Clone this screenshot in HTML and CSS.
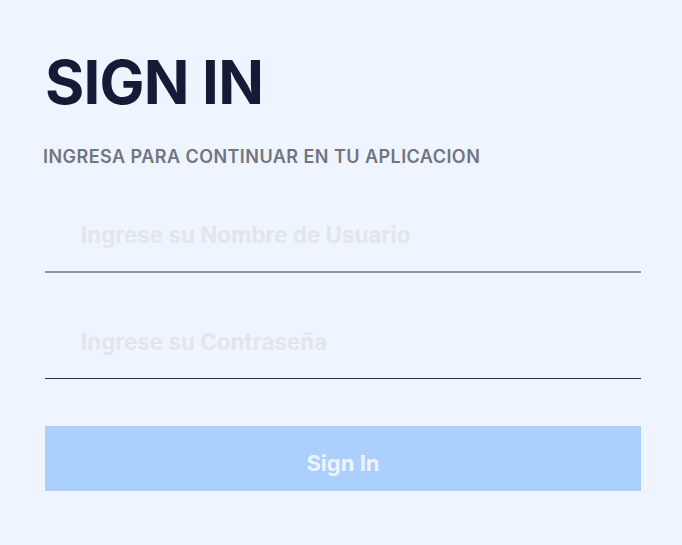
FILE: index.html
```html
<!DOCTYPE html>
<html lang="es">
<head>
<meta charset="utf-8">
<title>Sign In</title>
<link rel="stylesheet" href="styles.css">
</head>
<body>
<main class="login">
  <h1 class="title">SIGN IN</h1>
  <p class="subtitle">INGRESA PARA CONTINUAR EN TU APLICACION</p>
  <form class="form">
    <div class="field field-user">
      <input class="input" type="text" placeholder="Ingrese su Nombre de Usuario">
    </div>
    <div class="field field-pass">
      <input class="input" type="password" placeholder="Ingrese su Contraseña">
    </div>
    <button class="btn" type="button">Sign In</button>
  </form>
</main>
</body>
</html>
```
FILE: styles.css
```css
* { box-sizing: border-box; }
html, body { margin: 0; padding: 0; }
body {
  background: #eff5ff;
  font-family: Inter, "Noto Sans", sans-serif;
  width: 682px;
  height: 545px;
  overflow: hidden;
}
.login {
  padding: 44px 41px 0 45px;
}
.title {
  margin: 0;
  font-family: Inter, sans-serif;
  font-size: 60px;
  line-height: 76px;
  font-weight: 700;
  color: #161a36;
  letter-spacing: -0.8px;
}
.subtitle {
  margin: 26px 0 0 -2px;
  font-family: Inter, sans-serif;
  font-size: 18px;
  line-height: 22px;
  font-weight: 600;
  letter-spacing: 0.45px;
  color: #73747f;
}
.form {
  display: flex;
  flex-direction: column;
  margin-top: 33px;
}
.field {
  height: 72px;
}
.field-user { border-bottom: 2px solid #8b94a4; }
.field-pass { border-bottom: 1px solid #2f3542; margin-top: 34px; }
.input {
  width: 100%;
  height: 100%;
  border: 0;
  background: transparent;
  padding: 0 0 3px 36px;
  font-family: Inter, sans-serif;
  font-size: 22.4px;
  font-weight: 700;
  color: #333;
  outline: none;
}
.input::placeholder { color: #e3e5ea; }
.btn {
  margin-top: 47px;
  height: 65px;
  padding: 8px 0 0;
  border: 0;
  background: #abd0fe;
  color: #eef4ff;
  font-family: Inter, sans-serif;
  font-size: 22px;
  font-weight: 700;
}
```
